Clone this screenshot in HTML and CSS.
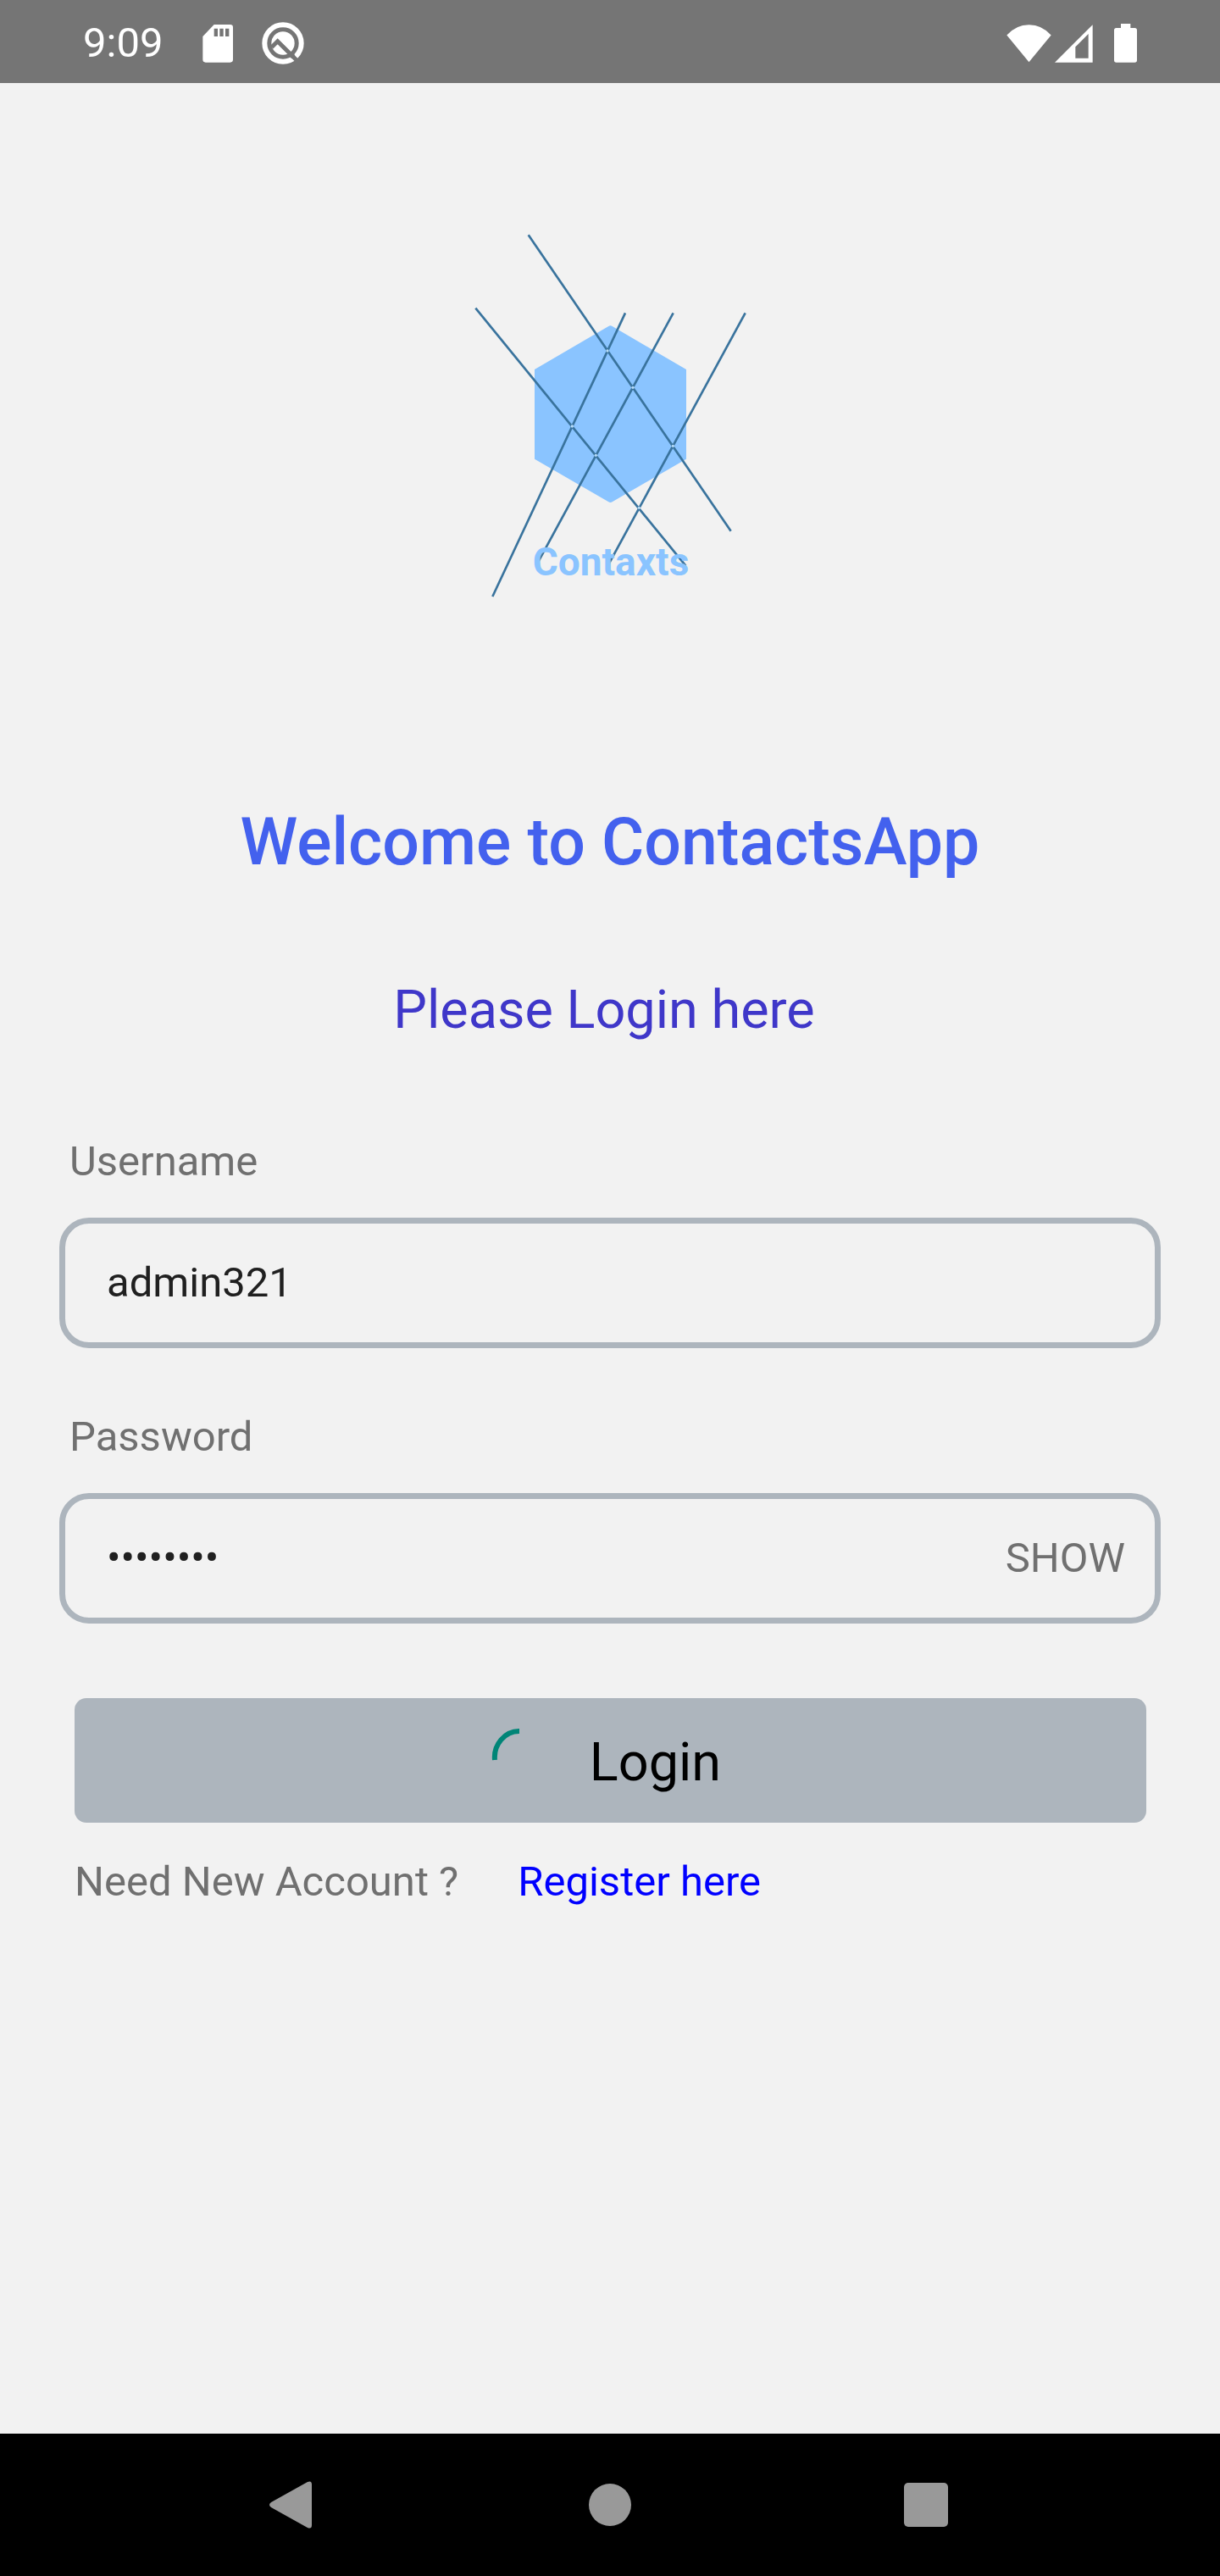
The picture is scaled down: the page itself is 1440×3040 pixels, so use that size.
FILE: index.html
```html
<!DOCTYPE html>
<html lang="en">
<head>
<meta charset="utf-8">
<meta name="viewport" content="width=device-width, initial-scale=1">
<title>ContactsApp</title>
<link rel="stylesheet" href="styles.css">
</head>
<body>
<header class="status-bar">
  <div class="status-group status-left">
    <time class="clock">9:09</time>
    <svg class="sd-icon" viewBox="0 0 108 135" aria-hidden="true">
      <path fill="#fff" fill-rule="evenodd" d="M41 0H98Q108 0 108 10V124Q108 134 98 134H11Q1 134 1 124V42ZM41 14V42H54V14ZM61 14V42H74V14ZM81 14V42H94V14Z"/>
    </svg>
    <svg class="q-icon" viewBox="0 0 150 150" aria-hidden="true">
      <circle cx="75" cy="75" r="65" fill="none" stroke="#fff" stroke-width="18"/>
      <circle cx="75" cy="75" r="41" fill="#fff"/>
      <path d="M35 89L56 68L130 142" fill="none" stroke="#757575" stroke-width="15"/>
      <path d="M100 112L112 124" fill="none" stroke="#757575" stroke-width="17"/>
    </svg>
  </div>
  <div class="status-group status-right">
    <svg class="wifi-icon" viewBox="0 0 160 135" aria-hidden="true">
      <path fill="#fff" d="M1 37Q34 0 80 0T159 37L80 133Z"/>
    </svg>
    <svg class="signal-icon" viewBox="0 0 135 135" aria-hidden="true">
      <path fill="#fff" fill-rule="evenodd" d="M0 134L134 1V134ZM73 79V119H119V33Z"/>
    </svg>
    <svg class="battery-icon" viewBox="0 0 81 138" aria-hidden="true">
      <path fill="#fff" d="M24 0H58V15H73Q81 15 81 23V129Q81 137 73 137H8Q0 137 0 129V23Q0 15 8 15H24Z"/>
    </svg>
  </div>
</header>

<main class="screen">
  <svg class="logo" viewBox="0 0 1080 1380" role="img" aria-label="Contaxts">
    <path fill="#8ac4ff" d="M535 375Q541 371 548 375L810 528V845L548 997Q541 1001 535 997L273 845V528Z"/>
    <g stroke="#39739d" stroke-width="8">
      <path d="M251 52L968 1100"/>
      <path d="M64 311L808 1223"/>
      <path d="M594 328L124 1332"/>
      <path d="M764 328L282 1216"/>
      <path d="M1019 328L536 1216"/>
    </g>
    <g fill="#b5dbf7">
      <circle cx="531" cy="462" r="5"/>
      <circle cx="621" cy="592" r="5"/>
      <circle cx="406" cy="729" r="5"/>
      <circle cx="490" cy="832" r="5"/>
      <circle cx="763" cy="799" r="5"/>
      <circle cx="643" cy="1018" r="5"/>
    </g>
    <text class="logo-text" x="543" y="1256" text-anchor="middle">Contaxts</text>
  </svg>
  <h1 class="title">Welcome to ContactsApp</h1>
  <p class="subtitle">Please Login here</p>

  <form class="form">
    <div class="field">
      <label class="label" for="username">Username</label>
      <div class="box">
        <input class="input" id="username" type="text" value="admin321">
      </div>
    </div>
    <div class="field">
      <label class="label" for="password">Password</label>
      <div class="box">
        <input class="input" id="password" type="password" value="admin321">
        <button class="show" type="button">SHOW</button>
      </div>
    </div>
    <button class="login" type="submit">
      <svg class="spinner" viewBox="0 0 70 70" aria-hidden="true">
        <path d="M35 3A29 31 0 0 0 6 37" fill="none" stroke="#008577" stroke-width="6"/>
      </svg>
      <span>Login</span>
    </button>
    <p class="register">
      <span>Need New Account ?</span>
      <a class="link" href="#register">Register here</a>
    </p>
  </form>
</main>

<nav class="nav-bar" aria-label="System">
  <button class="nav-button" type="button" aria-label="Back">
    <svg class="nav-icon" viewBox="0 0 56 56"><path fill="#999" d="M2 25L45 1Q50 -1 50 4V52Q50 57 45 55L2 31Q-2 28 2 25Z"/></svg>
  </button>
  <button class="nav-button" type="button" aria-label="Home">
    <svg class="nav-icon" viewBox="0 0 56 56"><circle cx="28" cy="28" r="25" fill="#999"/></svg>
  </button>
  <button class="nav-button" type="button" aria-label="Overview">
    <svg class="nav-icon" viewBox="0 0 56 56"><rect x="1" y="2" width="52" height="52" rx="5" fill="#999"/></svg>
  </button>
</nav>
</body>
</html>
```
FILE: styles.css
```css
* {
  box-sizing: border-box;
}

body {
  margin: 0;
  min-height: 100vh;
  display: flex;
  flex-direction: column;
  background: #f2f2f2;
  color: #707070;
  font-family: Roboto, "Liberation Sans", sans-serif;
  font-size: 49px;
  line-height: 58px;
}

button,
input {
  margin: 0;
  padding: 0;
  border: 0;
  background: none;
  color: inherit;
  font: inherit;
}

svg {
  display: block;
  flex: none;
}

/* Status bar */
.status-bar {
  display: flex;
  justify-content: space-between;
  align-items: center;
  height: 98px;
  padding: 4px 98px 0;
  background: #757575;
  color: #fff;
}

.status-group {
  display: flex;
  align-items: center;
}

.clock {
  margin-right: 47px;
}

.sd-icon {
  width: 36px;
  height: 45px;
  margin-right: 34px;
}

.q-icon {
  width: 50px;
  height: 50px;
}

.wifi-icon {
  width: 53px;
  height: 45px;
  margin-right: 4px;
}

.signal-icon {
  width: 45px;
  height: 45px;
  margin-right: 25px;
}

.battery-icon {
  width: 27px;
  height: 46px;
}

/* Login screen */
.screen {
  flex: 1;
  padding: 162px 70px 80px;
}

.logo {
  width: 360px;
  height: 460px;
  margin: 0 auto;
}

.logo-text {
  fill: #8ac4ff;
  font-size: 138px;
  font-weight: 700;
}

.title {
  margin: 229px 0 0;
  color: #4361ee;
  font-size: 77px;
  font-weight: 500;
  line-height: 90px;
  text-align: center;
}

.subtitle {
  margin: 116px 0 0;
  padding-right: 14px;
  color: #3f37c9;
  font-size: 63px;
  line-height: 74px;
  text-align: center;
}

.form {
  margin-top: 113px;
}

.field + .field {
  margin-top: 76px;
}

.label {
  display: block;
  margin: 0 12px 37px;
}

.box {
  display: flex;
  align-items: center;
  height: 154px;
  padding: 0 35px 0 49px;
  border: 7px solid #adb5bd;
  border-radius: 35px;
}

.input {
  flex: 1;
  min-width: 0;
  height: 58px;
  color: #202020;
  outline: 0;
}

.login {
  display: flex;
  justify-content: center;
  align-items: center;
  gap: 48px;
  width: calc(100% - 35px);
  height: 147px;
  margin: 88px 17px 0 18px;
  padding: 4px 12px 0 0;
  border-radius: 14px;
  background: #adb5bd;
  color: #000;
  font-size: 63px;
  line-height: 74px;
}

.spinner {
  width: 70px;
  height: 70px;
  margin-bottom: 10px;
}

.register {
  display: flex;
  gap: 70px;
  margin: 41px 18px 0;
}

.link {
  color: #00f;
  text-decoration: none;
}

/* System navigation */
.nav-bar {
  display: flex;
  justify-content: center;
  height: 168px;
  background: #000;
}

.nav-button {
  display: flex;
  justify-content: center;
  align-items: center;
  width: 26%;
}

.nav-icon {
  width: 56px;
  height: 56px;
}
```
